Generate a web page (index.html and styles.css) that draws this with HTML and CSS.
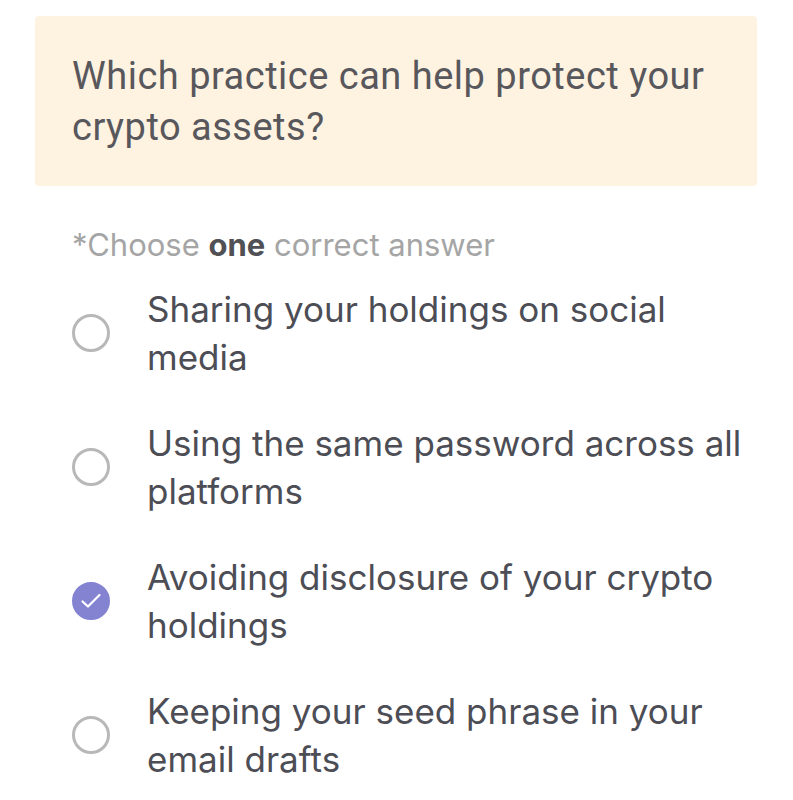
FILE: index.html
```html
<!DOCTYPE html>
<html lang="en">
<head>
    <meta charset="UTF-8">
    <meta name="viewport" content="width=device-width, initial-scale=1.0">
    <title>Quiz</title>
    <link rel="stylesheet" href="styles.css">
</head>
<body>
    <div class="quiz">
        <div class="question">
            <p>Which practice can help protect your crypto assets?</p>
        </div>
        <p class="hint">*Choose <b>one</b> correct answer</p>
        <ul class="options">
            <li class="option">
                <span class="radio"></span>
                <span class="label">Sharing your holdings on social media</span>
            </li>
            <li class="option">
                <span class="radio"></span>
                <span class="label">Using the same password across all platforms</span>
            </li>
            <li class="option selected">
                <span class="radio">
                    <svg width="22" height="22" viewBox="0 0 22 22"><path d="M2.5 11.5l5.5 5L19.5 5" fill="none" stroke="#fff" stroke-width="2.2" stroke-linecap="round" stroke-linejoin="round"/></svg>
                </span>
                <span class="label">Avoiding disclosure of your crypto holdings</span>
            </li>
            <li class="option">
                <span class="radio"></span>
                <span class="label">Keeping your seed phrase in your email drafts</span>
            </li>
        </ul>
    </div>
</body>
</html>
```

FILE: styles.css
```css
body {
    margin: 0;
    background: #fff;
    font-family: Inter, "Noto Sans", sans-serif;
}
.quiz {
    width: 722px;
    padding: 16px 0 0 35px;
}
.question {
    background: #fef2e1;
    border-radius: 4px;
    padding: 35px 30px 0 37px;
    height: 135px;
}
.question p {
    margin: 0;
    font-family: Roboto, sans-serif;
    font-size: 38px;
    letter-spacing: 0.5px;
    line-height: 51px;
    color: #58575c;
}
.hint {
    margin: 41px 0 0 37px;
    font-size: 31px;
    line-height: 36px;
    color: #a5a5a5;
}
.hint b {
    color: #505055;
    font-weight: 700;
}
.options {
    list-style: none;
    margin: 22px 0 0 0;
    padding: 0;
}
.option {
    display: flex;
    align-items: center;
    gap: 37px;
    padding-left: 37px;
    margin-bottom: 38px;
}
.radio {
    flex: none;
    width: 32px;
    height: 32px;
    border: 3px solid #b8b8b8;
    border-radius: 50%;
    display: flex;
    align-items: center;
    justify-content: center;
}
.selected .radio {
    border-color: #8383d2;
    background: #8383d2;
}
.label {
    font-size: 35px;
    line-height: 48px;
    color: #4c4d55;
    width: 605px;
}
```
